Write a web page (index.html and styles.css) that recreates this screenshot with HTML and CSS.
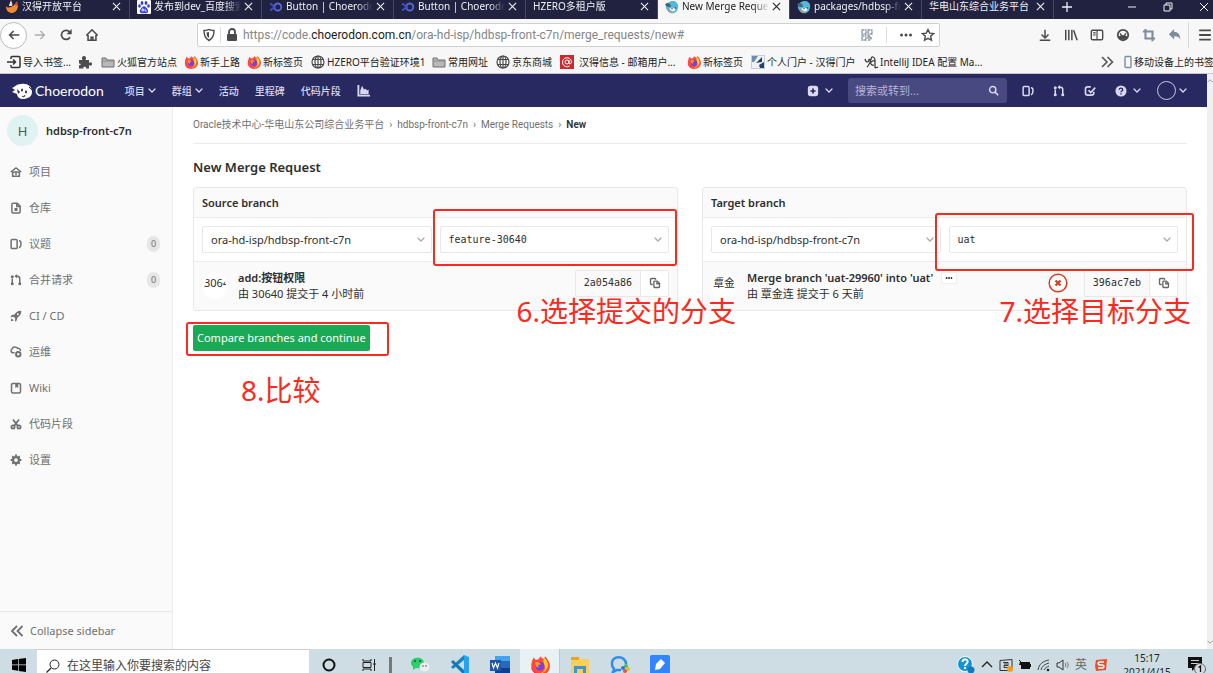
FILE: index.html
```html
<!DOCTYPE html>
<html lang="zh-CN">
<head>
<meta charset="utf-8">
<title>New Merge Request</title>
<link rel="stylesheet" href="styles.css">
</head>
<body>
<svg class="sprite" aria-hidden="true">
  <symbol id="x" viewBox="0 0 10 10"><path d="M1 1l8 8M9 1L1 9" fill="none" stroke="currentColor" stroke-width="1.2"/></symbol>
  <symbol id="chev" viewBox="0 0 8 6"><path d="M1 1l3 3 3-3" fill="none" stroke="currentColor" stroke-width="1.3" stroke-linecap="round"/></symbol>
  <symbol id="inf" viewBox="0 0 12 10"><circle cx="7.500" cy="5" r="3" fill="none" stroke="#5468d8" stroke-width="1.600"/><path d="M1 2l4 3-4 3" fill="none" stroke="#4450c8" stroke-width="1.600"/></symbol>
  <symbol id="fox" viewBox="0 0 16 16"><path d="M8 1c1 1 2 2 3 2 1-1 1-2 1-2 2 2 4 5 4 8a7.500 7 0 0 1-15 0c0-2 .5-5 2-7l1.500 2C6 4 8 3 8 1z" fill="#ff4a3c"/><path d="M11 2c3 2 4 5 3 8-1 3-4 5-7 5 4-1 5-3 5-5s-2-4-1-8z" fill="#ffc927"/><path d="M1 9c1 4 4 6 8 6-4 1-8-1-8-6z" fill="#f72b6c"/><circle cx="8" cy="9" r="3.500" fill="#7a3fe0"/><path d="M4 6c2-1 4 0 5 2-2-1-3 0-2 2-2 0-3-2-3-4z" fill="#ff9a1f"/></symbol>
  <symbol id="dir" viewBox="0 0 14 12"><path d="M1 2h4l1 2h7v7H1z" fill="#b8b8b8" stroke="#6f6f6f"/><path d="M1 5h12" stroke="#8a8a8a"/></symbol>
  <symbol id="globe" viewBox="0 0 14 14"><g fill="none" stroke="#4a4a4a" stroke-width="1.200"><circle cx="7" cy="7" r="6"/><ellipse cx="7" cy="7" rx="3" ry="6"/><path d="M1.500 4.500h11M1.500 9.500h11M7 1v12"/></g></symbol>
  <symbol id="issues" viewBox="0 0 16 16"><g fill="none" stroke="currentColor" stroke-width="2"><rect x="1.500" y="2" width="8" height="12" rx="1.500"/><path d="M12 3.500c1.500 0 2.500 1 2.500 2.500v3c0 2-1 3.500-2.500 4"/></g></symbol>
  <symbol id="mr" viewBox="0 0 16 16"><g fill="none" stroke="currentColor" stroke-width="2"><path d="M3 6v8M13 14V6c0-2-1-3-3-3H7"/></g><circle cx="3" cy="3.500" r="2" fill="currentColor"/><circle cx="3" cy="13" r="2" fill="currentColor"/><circle cx="13" cy="13" r="2" fill="currentColor"/><path d="M9.500 0v6L6 3z" fill="currentColor"/></symbol>
  <symbol id="copy" viewBox="0 0 16 16"><g fill="none" stroke="currentColor" stroke-width="1.800"><path d="M5 10H3.500C2.500 10 2 9.500 2 8.500v-5C2 2.500 2.500 2 3.500 2h4C8.500 2 9 2.500 9 3.500"/><path d="M7.500 5.500H11l3 3V13c0 .6-.4 1-1 1H7.500c-.6 0-1-.4-1-1V6.500c0-.6.4-1 1-1z"/><path d="M10.500 6v3H14"/></g></symbol>
  <symbol id="find" viewBox="0 0 14 14"><circle cx="6" cy="6" r="4" fill="none" stroke="currentColor" stroke-width="1.800"/><path d="M9 9l4 4" stroke="currentColor" stroke-width="2"/></symbol>
  <symbol id="bird" viewBox="0 0 16 16"><path d="M1 9C1 4 5 1 9 1c4 0 6 3 6 6 0 5-3 8-7 8-3 0-5-2-7-6z" fill="#52b8dc"/><path d="M0 5c3-3 6-1 7 2-2 2-5 1-7-2z" fill="#4b6472"/><path d="M5 10c3-2 6-1 7 1-1 2-5 3-7-1z" fill="#fff"/><circle cx="8" cy="10" r=".8" fill="#333"/><circle cx="12" cy="9" r=".8" fill="#333"/><path d="M3 13l4-1 2 3z" fill="#f18a54"/></symbol>
</svg>

<div class="tabs">
  <div class="tab tab-first"><svg viewBox="0 0 14 14"><path d="M1 6c2 3 6 1 8-1 2-1 3-1 4 0 0 5-3 8-6 8S1 11 1 6z" fill="#f08a35"/><path d="M4 6c0-2 1-3 2-6 1 3 2 4 1 6z" fill="#e8ddd5"/><path d="M9 5l3-4 1 5z" fill="#dd4b32"/></svg><span>汉得开放平台</span><button aria-label="关闭"><svg><use href="#x"/></svg></button></div>
  <div class="tab"><svg viewBox="0 0 14 14"><rect width="14" height="14" rx="1" fill="#fff"/><g fill="#3440e8"><ellipse cx="5" cy="3" rx="1.400" ry="2"/><ellipse cx="9" cy="3" rx="1.400" ry="2"/><ellipse cx="2.500" cy="6" rx="1.400" ry="1.800"/><ellipse cx="11.500" cy="6" rx="1.400" ry="1.800"/><path d="M7 6c2 1 5 4 4 6-1 2-3 1-4 1s-3 1-4-1c-1-2 2-5 4-6z"/></g><path d="M5 9h1.500v2H5zM8 9v2h2" stroke="#fff" fill="none" stroke-width=".8"/></svg><span>发布到dev_百度搜索</span><button aria-label="关闭"><svg><use href="#x"/></svg></button></div>
  <div class="tab"><svg><use href="#inf"/></svg><span>Button | Choerodon</span><button aria-label="关闭"><svg><use href="#x"/></svg></button></div>
  <div class="tab"><svg><use href="#inf"/></svg><span>Button | Choerodon</span><button aria-label="关闭"><svg><use href="#x"/></svg></button></div>
  <div class="tab"><span>HZERO多租户版</span><button aria-label="关闭"><svg><use href="#x"/></svg></button></div>
  <div class="tab tab-active"><svg><use href="#bird"/></svg><span>New Merge Request</span><button aria-label="关闭"><svg><use href="#x"/></svg></button></div>
  <div class="tab"><svg><use href="#bird"/></svg><span>packages/hdbsp-fr</span><button aria-label="关闭"><svg><use href="#x"/></svg></button></div>
  <div class="tab"><span class="full">华电山东综合业务平台</span><button aria-label="关闭"><svg><use href="#x"/></svg></button></div>
  <button class="win" aria-label="新建标签页"><svg viewBox="0 0 12 12"><path d="M6 1v10M1 6h10" stroke="currentColor" stroke-width="1.300"/></svg></button>
  <div class="win-group">
    <button class="win" aria-label="最小化"><svg viewBox="0 0 12 12"><path d="M2 6h8" stroke="currentColor"/></svg></button>
    <button class="win" aria-label="还原"><svg viewBox="0 0 12 12"><path d="M2 4h6v6H2zM4 4V2h6v6H8" fill="none" stroke="currentColor"/></svg></button>
    <button class="win" aria-label="关闭窗口"><svg viewBox="0 0 12 12"><path d="M2 2l8 8M10 2l-8 8" stroke="currentColor"/></svg></button>
  </div>
</div>

<div class="toolbar">
  <button class="tool back" aria-label="后退"><svg viewBox="0 0 16 16"><path d="M14 8H3M7.500 3.500L3 8l4.500 4.500" fill="none" stroke="currentColor" stroke-width="1.800"/></svg></button>
  <button class="tool pale" aria-label="前进"><svg viewBox="0 0 16 16"><path d="M2 8h11M8.500 3.500L13 8l-4.500 4.500" fill="none" stroke="currentColor" stroke-width="1.600"/></svg></button>
  <button class="tool" aria-label="刷新"><svg viewBox="0 0 16 16"><path d="M12.500 10.500A5.200 5.200 0 1 1 12 4.500" fill="none" stroke="currentColor" stroke-width="2"/><path d="M14.500 1v6H8.500z" fill="currentColor"/></svg></button>
  <button class="tool" aria-label="主页"><svg viewBox="0 0 16 16"><path d="M1.500 8.500L8 2l6.500 6.500M3.500 8v6h9V8M7 14v-3.500h2V14" fill="none" stroke="currentColor" stroke-width="1.800"/></svg></button>
  <div class="url">
    <svg viewBox="0 0 14 14"><path d="M2 2.500c3 0 4-1 5-1s2 1 5 1c0 5-1 8-5 10-4-2-5-5-5-10z" fill="none" stroke="currentColor" stroke-width="1.400"/><path d="M7 4v6c-2-1-2.500-3-2.500-5.500z" fill="currentColor"/></svg>
    <i class="rule"></i>
    <svg viewBox="0 0 14 14"><rect x="2" y="6" width="10" height="7" rx="1" fill="currentColor"/><path d="M4 6V4a3 3 0 0 1 6 0v2" fill="none" stroke="currentColor" stroke-width="1.800"/></svg>
    <div class="address" role="textbox" aria-label="地址">https://code.<b>choerodon.com.cn</b>/ora-hd-isp/hdbsp-front-c7n/merge_requests/new#</div>
    <svg class="qr" viewBox="0 0 14 14"><path d="M2 2h4v4H2zM8 2h4v4H8zM2 8h4v4H2zM8 8h2v2H8zM11 9v3M8 12h2" fill="none" stroke="currentColor" stroke-width="1.400" stroke-dasharray="2 .6"/></svg>
    <i class="rule rule-wide"></i>
    <svg viewBox="0 0 14 14"><g fill="currentColor"><circle cx="2.500" cy="7" r="1.500"/><circle cx="7" cy="7" r="1.500"/><circle cx="11.500" cy="7" r="1.500"/></g></svg>
    <svg class="star" viewBox="0 0 14 14"><path d="M7 1.500l1.700 3.600 3.900.5-2.900 2.700.8 3.900L7 10.300l-3.500 1.900.8-3.900L1.400 5.600l3.900-.5z" fill="none" stroke="currentColor" stroke-width="1.400"/></svg>
  </div>
  <button class="tool" aria-label="下载"><svg viewBox="0 0 16 16"><path d="M8 2v9M4 7.500L8 11.500l4-4M2 14h12" fill="none" stroke="currentColor" stroke-width="1.700"/></svg></button>
  <button class="tool" aria-label="书库"><svg viewBox="0 0 16 16"><path d="M2 2v12M5.500 2v12M9 2v12M11 2.500l4 11.500" stroke="currentColor" stroke-width="1.700"/></svg></button>
  <button class="tool" aria-label="侧栏"><svg viewBox="0 0 16 16"><rect x="1.500" y="2.500" width="13" height="11" rx="1.500" fill="none" stroke="currentColor" stroke-width="1.600"/><path d="M8 3v10M3.500 5.500h3M3.500 8h3" stroke="currentColor" stroke-width="1.300"/></svg></button>
  <button class="tool" aria-label="账户"><svg viewBox="0 0 16 16"><circle cx="8" cy="8" r="6" fill="none" stroke="currentColor" stroke-width="2"/><path d="M5 6c0 4 6 4 6 0" fill="none" stroke="currentColor" stroke-width="1.500"/><path d="M3 9h10c0 3-3 4.500-5 4.500S3 12 3 9z" fill="currentColor"/></svg></button>
  <button class="tool blue" aria-label="截图"><svg viewBox="0 0 16 16"><path d="M4 1v11h11M1 4h11v11" fill="none" stroke="currentColor" stroke-width="2.400"/></svg></button>
  <button class="tool blue" aria-label="撤销"><svg viewBox="0 0 16 16"><path d="M7 1v3.500c5 0 7 3 7 9-1-3-3-4-7-4V13L1 7z" fill="currentColor"/></svg></button>
  <button class="tool menu" aria-label="菜单"><svg viewBox="0 0 12 12"><path d="M1 2h10M1 6h10M1 10h10" stroke="currentColor" stroke-width="1.600"/></svg></button>
</div>

<nav class="bookmarks" aria-label="书签">
  <a href="#"><svg viewBox="0 0 14 14"><path d="M4 4V2.500C4 2 4.300 1.500 5 1.500h7c.6 0 1 .4 1 1v9c0 .6-.4 1-1 1H5c-.6 0-1-.4-1-1V10M0 7h8M6 4.500L8.500 7 6 9.500" fill="none" stroke="#333" stroke-width="1.500"/></svg>导入书签...</a>
  <a href="#" aria-label="扩展"><svg viewBox="0 0 14 14"><path d="M1 5h3.500C3 2 5 1 6 1s3 1 1.500 4H11v3c2-1.500 3-.5 3 1s-1 2.500-3 1v3.500H8c1-2-3.500-2.500-2.500 0H1V10c2 1 2.500-2 0-1.500z" fill="#4d4d4d"/></svg></a>
  <a href="#"><svg><use href="#dir"/></svg>火狐官方站点</a>
  <a href="#"><svg><use href="#fox"/></svg>新手上路</a>
  <a href="#"><svg><use href="#fox"/></svg>新标签页</a>
  <a href="#"><svg><use href="#globe"/></svg>HZERO平台验证环境1</a>
  <a href="#"><svg><use href="#dir"/></svg>常用网址</a>
  <a href="#"><svg><use href="#globe"/></svg>京东商城</a>
  <a href="#" class="wide"><svg viewBox="0 0 14 14"><rect width="14" height="14" fill="#cc2a30"/><g fill="none" stroke="#fff"><circle cx="7" cy="7" r="2"/><path d="M9 5v3c0 1.500 2.500 1 2.500-1a4.500 4.500 0 1 0-2 4"/></g></svg>汉得信息 - 邮箱用户...</a>
  <a href="#"><svg><use href="#fox"/></svg>新标签页</a>
  <a href="#"><svg viewBox="0 0 14 14"><rect x=".5" y=".5" width="13" height="13" fill="#eef3f8" stroke="#c6ced6"/><path d="M1 1h6L3 7H1z" fill="#6d8db0"/><path d="M5 8l6-6v5zM8 10l5-3v6H9z" fill="#25426d"/></svg>个人门户 - 汉得门户</a>
  <a href="#"><svg viewBox="0 0 14 14"><path d="M1 4c1 4 4 4 4 0M5 4c3 1 0 6-2 8M7 5c0-5 4-3 4 0v8M11 6c-6-1-5 5-1 4M11 13l3-1" fill="none" stroke="#333" stroke-width="1.200"/></svg>IntelliJ IDEA 配置 Ma...</a>
  <button aria-label="更多书签"><svg viewBox="0 0 14 14"><path d="M2 2l5 5-5 5M7.500 2l5 5-5 5" fill="none" stroke="#555" stroke-width="1.600"/></svg></button>
  <a href="#" class="mobile"><svg viewBox="0 0 8 14"><rect x="1" y="1.500" width="6" height="11" rx="1" fill="none" stroke="#7c8fa0" stroke-width="1.400"/></svg>移动设备上的书签</a>
</nav>

<div class="viewport">
  <div class="site">
    <header class="topbar">
      <a class="brand" href="#"><svg viewBox="0 0 22 18"><path d="M1 6c3-1 4-4 9-4 6-1 11 2 11 8 0 5-5 7-9 7-3 0-6-2-6-5L1 10l3-2z" fill="#fff"/><path d="M6 7l3 3-2 2z" fill="#292961"/><ellipse cx="11" cy="8" rx="1" ry="1.600" fill="#292961"/><ellipse cx="15" cy="10" rx="1" ry="1.400" fill="#292961"/><path d="M11 14l2 1 1-2M18 5l3 3" stroke="#292961" fill="none"/></svg>Choerodon</a>
      <nav class="links">
        <a href="#">项目<svg><use href="#chev"/></svg></a>
        <a href="#">群组<svg><use href="#chev"/></svg></a>
        <a href="#">活动</a>
        <a href="#">里程碑</a>
        <a href="#">代码片段</a>
        <a href="#" aria-label="图表"><svg class="chart" viewBox="0 0 14 14"><path d="M1.500 1v11.500H14" fill="none" stroke="currentColor" stroke-width="2"/><path d="M3.500 11V7l2-5 2 4 2-1 1 2 2-1v5z" fill="currentColor"/></svg></a>
      </nav>
      <button class="top-btn" aria-label="新建"><svg viewBox="0 0 14 14"><rect x="1" y="1" width="12" height="12" rx="3" fill="currentColor"/><path d="M7 4v6M4 7h6" stroke="#292961" stroke-width="2"/></svg><svg class="c"><use href="#chev"/></svg></button>
      <div class="search"><input aria-label="搜索" placeholder="搜索或转到..."><svg><use href="#find"/></svg></div>
      <div class="top-icons">
        <button class="top-btn" aria-label="议题"><svg><use href="#issues"/></svg></button>
        <button class="top-btn" aria-label="合并请求"><svg><use href="#mr"/></svg></button>
        <button class="top-btn" aria-label="待办"><svg viewBox="0 0 16 16"><path d="M9 2.500H5C3 2.500 2 3.500 2 5v6c0 1.500 1 2.500 3 2.500h5c2 0 3-1 3-2.500V9M6 7l3 3 6-6.500" fill="none" stroke="currentColor" stroke-width="2.200"/></svg></button>
      </div>
      <button class="top-btn" aria-label="帮助"><svg viewBox="0 0 14 14"><circle cx="7" cy="7" r="6.500" fill="currentColor"/><path d="M5 5.500C5 3 9 3 9 5.500 9 7 7 6.500 7 8.500M7 9.500v1.700" fill="none" stroke="#292961" stroke-width="1.600"/></svg><svg class="c"><use href="#chev"/></svg></button>
      <button class="top-btn user" aria-label="用户"><i></i><svg class="c"><use href="#chev"/></svg></button>
    </header>
    <div class="page">
      <aside class="sidebar">
        <a class="project" href="#"><span class="avatar">H</span>hdbsp-front-c7n</a>
        <a class="item" href="#"><svg viewBox="0 0 16 16"><path d="M1 8l7-5.500L15 8M3.500 8v5.500h9V8" fill="none" stroke="currentColor" stroke-width="2"/><path d="M3 7h10v2H3zM7 9h2v3H7z" fill="currentColor"/></svg>项目</a>
        <a class="item" href="#"><svg viewBox="0 0 16 16"><path d="M4 1.500h5.500l4 4V13c0 1-.5 1.500-1.500 1.500H4c-1 0-1.500-.5-1.500-1.500V3c0-1 .5-1.500 1.500-1.500zM9 2v4h4" fill="none" stroke="currentColor" stroke-width="2"/><path d="M6 8h4v4H6z" fill="currentColor"/></svg>仓库</a>
        <a class="item" href="#"><svg><use href="#issues"/></svg>议题<span class="badge">0</span></a>
        <a class="item" href="#"><svg><use href="#mr"/></svg>合并请求<span class="badge">0</span></a>
        <a class="item" href="#"><svg viewBox="0 0 16 16"><path d="M15 1c-5 0-7 2-9 5L2 7 .5 9.500 5 9l2 2-.5 4.500L9 14l1-4c3-2 5-4 5-9z" fill="currentColor"/><path d="M1 15l1-4 3 3z" fill="currentColor"/><circle cx="10.500" cy="5.500" r="1.300" fill="#fafafa"/></svg>CI / CD</a>
        <a class="item" href="#"><svg viewBox="0 0 16 16"><path d="M6 9H3.500A3 3 0 0 1 3 3.500C4 1 8 .5 10 3c2-.5 4 1 4 3.500" fill="none" stroke="currentColor" stroke-width="2"/><circle cx="11" cy="11" r="3" fill="none" stroke="currentColor" stroke-width="2.500"/></svg>运维</a>
        <a class="item" href="#"><svg viewBox="0 0 16 16"><rect x="2" y="2" width="12" height="12.500" rx="2" fill="none" stroke="currentColor" stroke-width="2"/><path d="M7 2h4v6L9 6.500 7 8z" fill="currentColor"/></svg>Wiki</a>
        <a class="item" href="#"><svg viewBox="0 0 16 16"><g fill="none" stroke="currentColor" stroke-width="2.300"><circle cx="4" cy="12" r="2.200"/><circle cx="12" cy="12" r="2.200"/><path d="M4 2l6.500 8.500M12 2L5.500 10.500"/></g></svg>代码片段</a>
        <a class="item" href="#"><svg viewBox="0 0 16 16"><circle cx="8" cy="8" r="4" fill="none" stroke="currentColor" stroke-width="3"/><path d="M8 .8v3M8 12.200v3M.8 8h3M12.200 8h3M3 3l2 2M11 11l2 2M13 3l-2 2M3 13l2-2" stroke="currentColor" stroke-width="2.600"/></svg>设置</a>
        <button class="collapse"><svg viewBox="0 0 14 14"><path d="M7 2L2 7l5 5M12.500 2l-5 5 5 5" fill="none" stroke="currentColor" stroke-width="1.800"/></svg>Collapse sidebar</button>
      </aside>
      <main class="content">
        <nav class="crumbs"><a href="#">Oracle技术中心-华电山东公司综合业务平台</a><i>›</i><a href="#">hdbsp-front-c7n</a><i>›</i><a href="#">Merge Requests</a><i>›</i><b>New</b></nav>
        <h1>New Merge Request</h1>
        <form class="compare">
          <div class="panels">
            <section class="panel">
              <h2>Source branch</h2>
              <div class="pickers">
                <div class="field"><select aria-label="Source project"><option>ora-hd-isp/hdbsp-front-c7n</option></select><svg><use href="#chev"/></svg></div>
                <div class="field mono"><select aria-label="Source branch"><option>feature-30640</option></select><svg><use href="#chev"/></svg><i class="mark mark-source"></i></div>
              </div>
              <div class="commit">
                <span class="face">30640</span>
                <div class="message"><p><b>add:按钮权限</b></p><p>由 30640 提交于 4 小时前</p></div>
                <div class="sha"><code>2a054a86</code><button type="button" aria-label="复制"><svg><use href="#copy"/></svg></button></div>
              </div>
              <p class="note note-source">6.选择提交的分支</p>
            </section>
            <section class="panel">
              <h2>Target branch</h2>
              <div class="pickers">
                <div class="field"><select aria-label="Target project"><option>ora-hd-isp/hdbsp-front-c7n</option></select><svg><use href="#chev"/></svg></div>
                <div class="field mono"><select aria-label="Target branch"><option>uat</option></select><svg><use href="#chev"/></svg><i class="mark mark-target"></i></div>
              </div>
              <div class="commit">
                <span class="face">覃金</span>
                <div class="message"><p><b>Merge branch 'uat-29960' into 'uat'</b><button type="button" class="more" aria-label="更多"><svg viewBox="0 0 10 4"><g fill="currentColor"><circle cx="2" cy="2" r="1.200"/><circle cx="5" cy="2" r="1.200"/><circle cx="8" cy="2" r="1.200"/></g></svg></button></p><p>由 覃金连 提交于 6 天前</p></div>
                <svg class="failed" viewBox="0 0 20 20"><circle cx="10" cy="10" r="8.800" fill="#fff" stroke="#db3b21" stroke-width="1.500"/><path d="M7.500 7.500l5 5M12.500 7.500l-5 5" stroke="#db3b21" stroke-width="2.200"/></svg>
                <div class="sha"><code>396ac7eb</code><button type="button" aria-label="复制"><svg><use href="#copy"/></svg></button></div>
              </div>
              <p class="note note-target">7.选择目标分支</p>
            </section>
          </div>
          <div class="actions">
            <button type="button" class="submit">Compare branches and continue</button>
            <i class="mark mark-submit"></i>
            <p class="note note-submit">8.比较</p>
          </div>
        </form>
      </main>
    </div>
  </div>
  <div class="scrollbar"><svg><use href="#chev"/></svg><svg><use href="#chev"/></svg></div>
</div>

<footer class="taskbar">
  <div class="task-row">
    <button class="start" aria-label="开始"><svg viewBox="0 0 14 14"><path d="M0 2l6-1v5.500H0zM6.700.9L14 0v6.500H6.700zM0 7.300h6v5.500l-6-1zM6.700 7.300H14V14l-7.300-1z" fill="#000"/></svg></button>
    <label class="task-search"><svg viewBox="0 0 14 14"><circle cx="8.500" cy="5.500" r="4.500" fill="none" stroke="#222"/><path d="M5 9l-4.500 4.500" stroke="#222" stroke-width="1.200"/></svg><input placeholder="在这里输入你要搜索的内容"></label>
    <div class="apps">
      <button aria-label="Cortana"><svg viewBox="0 0 20 20"><circle cx="10" cy="10" r="5.500" fill="none" stroke="#111" stroke-width="2"/></svg></button>
      <button aria-label="任务视图"><svg viewBox="0 0 20 20"><path d="M4 4v2h8V4M4 16v-2h8v2M4 7.500h8v5H4zM15.500 4v12M14 9h3" fill="none" stroke="#222"/></svg></button>
      <i class="divider"></i>
      <button aria-label="微信"><svg viewBox="0 0 20 20"><path d="M1 8c0-7 13-7 13 0 0 5-5 6-8 5l-3 2v-3C2 11 1 10 1 8z" fill="#2bd06e"/><ellipse cx="14.500" cy="12" rx="5" ry="4.500" fill="#eee"/><g fill="#333"><circle cx="5" cy="6" r=".9"/><circle cx="10" cy="6" r=".9"/><circle cx="13" cy="11" r=".7"/><circle cx="16" cy="11" r=".7"/></g></svg></button>
      <button aria-label="VS Code"><svg viewBox="0 0 20 20"><path d="M14 0l5 2v16l-5 2z" fill="#27a4ee"/><path d="M14 0v5L3 14l-2-2z" fill="#1b83c5"/><path d="M14 20v-5L3 5 1 7z" fill="#1976b5"/></svg></button>
      <button aria-label="Word"><svg viewBox="0 0 20 20"><path d="M5 1h15v18H5z" fill="#2b68b8"/><path d="M5 1h15v5H5z" fill="#41a5ee"/><path d="M5 13h15v6H5z" fill="#103f91"/><path d="M0 5h11v11H0z" fill="#1b56ab"/><path d="M2 8l1.500 5 2-5 2 5L9 8" fill="none" stroke="#fff" stroke-width="1.200"/></svg></button>
      <button class="running" aria-label="Firefox"><svg><use href="#fox"/></svg></button>
      <button aria-label="文件"><svg viewBox="0 0 20 20"><path d="M1 2h8l1 2h9v14H1z" fill="#f9cf5c"/><path d="M1 2h8v3H1z" fill="#e4a624"/><path d="M4 18v-7h12v7h-3v-4H7v4z" fill="#3e95d6"/></svg></button>
      <button aria-label="企业微信"><svg viewBox="0 0 20 20"><path d="M16 9c0-9-15-9-14 0 0 3 1 4 2 5l-1 3 4-2h4" fill="none" stroke="#2d8de8" stroke-width="2.500"/><circle cx="16" cy="11" r="2" fill="#55bd44"/><circle cx="18" cy="14" r="2" fill="#f8b62b"/><circle cx="15" cy="16" r="2" fill="#e9563b"/><circle cx="13" cy="13" r="2" fill="#2878e0"/></svg></button>
      <button aria-label="笔记"><svg viewBox="0 0 20 20"><rect width="20" height="20" rx="2" fill="#3284ff"/><path d="M5 15l1-6 5-5 4 4-5 6z" fill="#fff"/></svg></button>
    </div>
    <div class="tray">
      <svg class="help" viewBox="0 0 18 18"><circle cx="8" cy="8" r="7.500" fill="#1295d4" stroke="#fff"/><path d="M5.500 6c0-4 6-3 5 0-.5 2-2.500 2-2.500 4M8 11v2" fill="none" stroke="#fff" stroke-width="2"/><circle cx="14" cy="14" r="3.500" fill="#1678b8"/></svg>
      <svg viewBox="0 0 14 14"><path d="M2 9l5-5 5 5" fill="none" stroke="#222" stroke-width="1.300"/></svg>
      <svg viewBox="0 0 14 14"><path d="M1 2.500l12-1v11H1z" fill="none" stroke="#333"/><path d="M4 4.500h5v3H5v2h4M5 6h3" fill="none" stroke="#333"/><circle cx="11" cy="11" r="3" fill="#ff9a16"/></svg>
      <svg viewBox="0 0 14 14"><path d="M2 4h10v2h1v3h-1v2H3V7H1z" fill="#111"/><path d="M1 2l2 2" stroke="#111"/></svg>
      <svg viewBox="0 0 14 14"><g fill="none" stroke="#444"><path d="M1 12C2 6 6 3 12 2M4 12c1-4 4-6 8-7M7 12c1-2 3-3 5-4"/></g><circle cx="11" cy="12" r="1.300" fill="#222"/></svg>
      <svg viewBox="0 0 14 14"><path d="M1 5h2l4-3v10L3 9H1z" fill="none" stroke="#333"/><path d="M9 5c1 1 1 3 0 4M11 4c1.500 2 1.500 4 0 6" stroke="#777" fill="none"/></svg>
      <span class="ime">英</span>
      <svg viewBox="0 0 14 14"><path d="M2 2l11-1-1 11-10 1-1-5z" fill="#ee4d2d"/><path d="M10 4H6C3 4 4 7 6 7h2c3 0 2 3 0 3H4" fill="none" stroke="#fff" stroke-width="1.600"/></svg>
      <time><span>15:17</span><span>2021/4/15</span></time>
      <svg class="notice" viewBox="0 0 20 20"><path d="M2 2h14v11H9l-3 3v-3H2z" fill="#111"/><path d="M5 5.500h8M5 8.500h8" stroke="#ccc"/><circle cx="14" cy="14" r="5.500" fill="#d5dde0" stroke="#666"/><path d="M12.500 12.500L14.500 11v6" fill="none" stroke="#111" stroke-width="1.300"/></svg>
    </div>
  </div>
</footer>
</body>
</html>
```
FILE: styles.css
```css
* { box-sizing: border-box; }
body {
  margin: 0;
  height: 100vh;
  display: flex;
  flex-direction: column;
  overflow: hidden;
  background: #fff;
  color: #2e2e2e;
  font: 11px/16px "Noto Sans", "Noto Sans CJK SC", sans-serif;
}
button, input, select { font: inherit; color: inherit; border: 0; background: none; padding: 0; margin: 0; }
a { color: inherit; text-decoration: none; }
p, h1, h2 { margin: 0; }
svg { flex: none; display: block; width: 14px; height: 14px; }
i { font-style: normal; }
.sprite { position: absolute; width: 0; height: 0; }

/* Browser tabs */
.tabs { flex: none; display: flex; height: 19px; background: #20223f; color: #f0f0f4; overflow: hidden; }
.tab { flex: 0 1 132px; min-width: 0; display: flex; align-items: center; gap: 3px; padding: 0 8px 6px 7px; border-right: 1px solid #46485f; font-size: 10px; line-height: 13px; }
.tab-first { flex-basis: 130px; padding-left: 5px; }
.tab span { flex: 1; min-width: 0; overflow: hidden; white-space: nowrap; mask-image: linear-gradient(to right, #000 82%, transparent 100%); }
.tab .full { mask-image: none; }
.tab button svg { width: 9px; height: 9px; }
.tab-active { background: #f7f7f8; color: #222; }
.win { width: 26px; height: 13px; display: grid; place-items: center; }
.win svg { width: 12px; height: 12px; }
.win-group { flex: 1; display: flex; justify-content: flex-end; gap: 10px; margin-right: -4px; }

/* Navigation toolbar */
.toolbar { flex: none; display: flex; align-items: center; height: 32px; background: #f7f7f8; color: #4a4a4c; }
.tool { flex: none; width: 26px; height: 26px; display: grid; place-items: center; }
.tool svg { width: 14px; height: 14px; }
.toolbar .back { width: 27px; height: 27px; border: 1px solid #bbb; border-radius: 50%; background: #fff; }
.toolbar .pale { color: #b0b0b2; }
.toolbar .blue { color: #7f8c9c; }
.toolbar .menu { width: 25px; border-left: 1px solid #d8d8da; padding-left: 8px; }
.url { flex: 1; min-width: 0; display: flex; align-items: center; gap: 4px; height: 24px; margin: 0 92px; padding: 0 4px; border: 1px solid #d0d0d2; border-radius: 2px; background: #fff; }
.rule { width: 1px; height: 16px; background: #ddd; }
.rule-wide { margin: 0 8px; }
.star { margin-left: 4px; }
.address { flex: 1; min-width: 0; font-family: Roboto, sans-serif; font-size: 12px; white-space: nowrap; overflow: hidden; color: #858587; }
.address b { font-weight: 400; color: #1a1a1a; }
.qr { color: #8593a3; }

/* Bookmarks */
.bookmarks { flex: none; display: grid; grid-template-columns: 71px 23px 83px 63px 64px 121px 64px 64px 127px 64px 113px 1fr 24px 89px; align-items: center; height: 23px; padding-left: 7px; background: #f7f7f8; border-bottom: 1px solid #c8c8cc; font-size: 10px; white-space: nowrap; color: #222; }
.bookmarks a { display: flex; align-items: center; gap: 2px; min-width: 0; }
.bookmarks a.wide { gap: 5px; }
.bookmarks .mobile svg { width: 8px; }

/* Site frame */
.viewport { flex: 1; min-height: 0; display: flex; }
.site { flex: 1; min-width: 0; display: flex; flex-direction: column; }
.scrollbar { width: 6px; background: #f0f0f1; color: #999; display: flex; flex-direction: column; justify-content: space-between; padding: 4px 0; }
.scrollbar svg { width: 6px; height: 5px; }
.scrollbar svg:first-child { rotate: 180deg; }

.topbar { flex: none; display: flex; align-items: center; height: 33px; padding: 0 20px 0 11px; background: #292961; color: #d8d8f0; }
.brand { display: flex; align-items: center; gap: 2px; font: 14px/20px Lato, sans-serif; color: #fff; }
.brand svg { width: 22px; height: 18px; }
.links { flex: 1; display: flex; align-items: center; gap: 16px; margin-left: 21px; font-size: 10px; font-weight: 500; }
.links a { display: flex; align-items: center; gap: 3px; }
.links svg { width: 8px; height: 6px; }
.links .chart { width: 13px; height: 13px; }
.top-btn { display: flex; align-items: center; gap: 6px; }
.top-btn svg { width: 12px; height: 12px; }
.top-btn .c { width: 8px; height: 6px; }
.search { display: flex; align-items: center; width: 159px; height: 25px; margin: 0 15px; padding: 0 8px 0 7px; background: #494982; border-radius: 3px; }
.search input { flex: 1; min-width: 0; }
.search input::placeholder { color: #b5b5d4; opacity: 1; }
.search svg { width: 11px; height: 11px; }
.top-icons { display: flex; gap: 19px; margin-right: 19px; }
.user { margin-left: 16px; gap: 3px; }
.user i { width: 19px; height: 19px; border: 1px solid #c8c8e0; border-radius: 50%; }

/* Project sidebar */
.page { flex: 1; min-height: 0; display: flex; }
.sidebar { flex: none; width: 173px; display: flex; flex-direction: column; background: #fafafa; border-right: 1px solid #ececec; color: #707070; }
.project { display: flex; align-items: center; gap: 8px; height: 47px; padding-left: 7px; font-weight: 600; color: #2e2e2e; }
.avatar { display: grid; place-items: center; width: 31px; height: 31px; border-radius: 50%; background: #e0f2f1; color: #555; font-size: 13px; font-weight: 400; }
.item { display: flex; align-items: center; gap: 7px; height: 36px; padding: 0 12px 0 10px; }
.item svg { width: 12px; height: 12px; }
.badge { margin-left: auto; width: 13px; height: 16px; border-radius: 8px; background: #e6e6e6; text-align: center; font-size: 9px; }
.collapse { display: flex; align-items: center; gap: 6px; height: 38px; margin-top: auto; padding-left: 10px; border-top: 1px solid #e8e8e8; }

/* Content */
.content { flex: 1; min-width: 0; padding: 0 20px; }
.crumbs { display: flex; align-items: center; gap: 5px; height: 37px; border-bottom: 1px solid #ececec; font-family: Roboto, "Noto Sans CJK SC", sans-serif; font-size: 10px; color: #707070; }
.crumbs b { color: #2e2e2e; font-weight: 600; }
h1 { margin: 13px 0 10px; font-size: 13px; line-height: 20px; font-weight: 600; }
.panels { display: grid; grid-template-columns: 1fr 1fr; gap: 24px; }
.panel { position: relative; border: 1px solid #e8e8e8; border-radius: 3px; background: #fafafa; }
h2 { padding: 6px 8px; height: 29px; font-size: 11px; line-height: 17px; font-weight: 600; }
.pickers { display: grid; grid-template-columns: 1fr 1fr; gap: 8px; padding: 8px; background: #fff; border: solid #ececec; border-width: 1px 0; }
.field { position: relative; display: grid; align-items: center; }
.field select { grid-area: 1 / 1; width: 100%; height: 27px; appearance: none; padding: 0 20px 0 8px; border: 1px solid #e8e8e8; border-radius: 2px; background: #fff; }
.field svg { grid-area: 1 / 1; justify-self: end; width: 8px; height: 6px; margin-right: 7px; color: #aaa; pointer-events: none; }
.field.mono select, .sha { font-family: "DejaVu Sans Mono", monospace; font-size: 10px; }
.commit { display: flex; align-items: center; gap: 10px; height: 48px; padding: 0 8px; }
.face { flex: none; width: 26px; height: 26px; border: 2px solid #fff; border-radius: 50%; overflow: hidden; background: #fff; white-space: nowrap; }
.message { flex: 1; min-width: 0; white-space: nowrap; }
.message p { display: flex; align-items: center; gap: 8px; }
.message b { font-weight: 600; }
.more { padding: 3px; border-radius: 2px; background: #fff; border: 1px solid #eee; }
.more svg { width: 8px; height: 4px; }
.failed { width: 20px; height: 20px; margin: -6px 6px 0 0; }
.sha { display: flex; align-items: center; height: 27px; margin-top: -6px; border: 1px solid #e8e8e8; border-radius: 2px; }
.sha code { padding: 0 8px; font: inherit; }
.sha button { display: grid; place-items: center; width: 28px; height: 25px; border-left: 1px solid #e8e8e8; background: #fff; color: #666; }
.sha svg { width: 12px; height: 12px; }
.actions { position: relative; padding-top: 14px; }
.submit { height: 26px; padding: 0 4px; border-radius: 2px; background: #1aaa55; color: #fff; }

/* Annotations over the page */
.mark { position: absolute; border: 2px solid #fa2a1e; border-radius: 3px; pointer-events: none; z-index: 1; }
.mark-source { inset: -17px -8px -13px -7px; }
.mark-target { inset: -13px -16px -18px -14px; }
.mark-submit { top: 11px; left: -7px; width: 203px; height: 34px; }
.note { position: absolute; z-index: 1; font-size: 28px; line-height: 36px; white-space: nowrap; color: #fa2a1e; }
.note-source { right: -59px; bottom: -19px; }
.note-target { right: -5px; bottom: -19px; }
.note-submit { top: 61px; left: 48px; }

/* Taskbar */
.taskbar { flex: none; height: 24px; overflow: hidden; background: #cddde3; }
.task-row { display: flex; align-items: stretch; height: 32px; }
.start { width: 37px; display: grid; place-items: center; }
.task-search { display: flex; align-items: center; gap: 7px; width: 272px; padding-left: 9px; background: #fff; border-top: 1px solid #ccc; }
.task-search input { flex: 1; min-width: 0; font-size: 12px; }
.task-search input::placeholder { color: #444; opacity: 1; }
.apps { flex: 1; display: flex; }
.apps button { width: 40px; display: grid; place-items: center; }
.apps svg { width: 20px; height: 20px; }
.apps .running { background: #e8f1f4; border-right: 1px solid #b8cbd2; }
.divider { width: 3px; height: 16px; margin: 8px 8px 0 0; background: #777; }
.tray { display: flex; align-items: center; gap: 5px; padding-right: 7px; }
.tray .help { width: 18px; height: 18px; }
.ime { width: 14px; font-size: 12px; color: #666; }
time { display: flex; flex-direction: column; align-items: center; width: 68px; font-size: 10px; line-height: 14px; color: #222; }
.tray .notice { width: 20px; height: 20px; }
```
